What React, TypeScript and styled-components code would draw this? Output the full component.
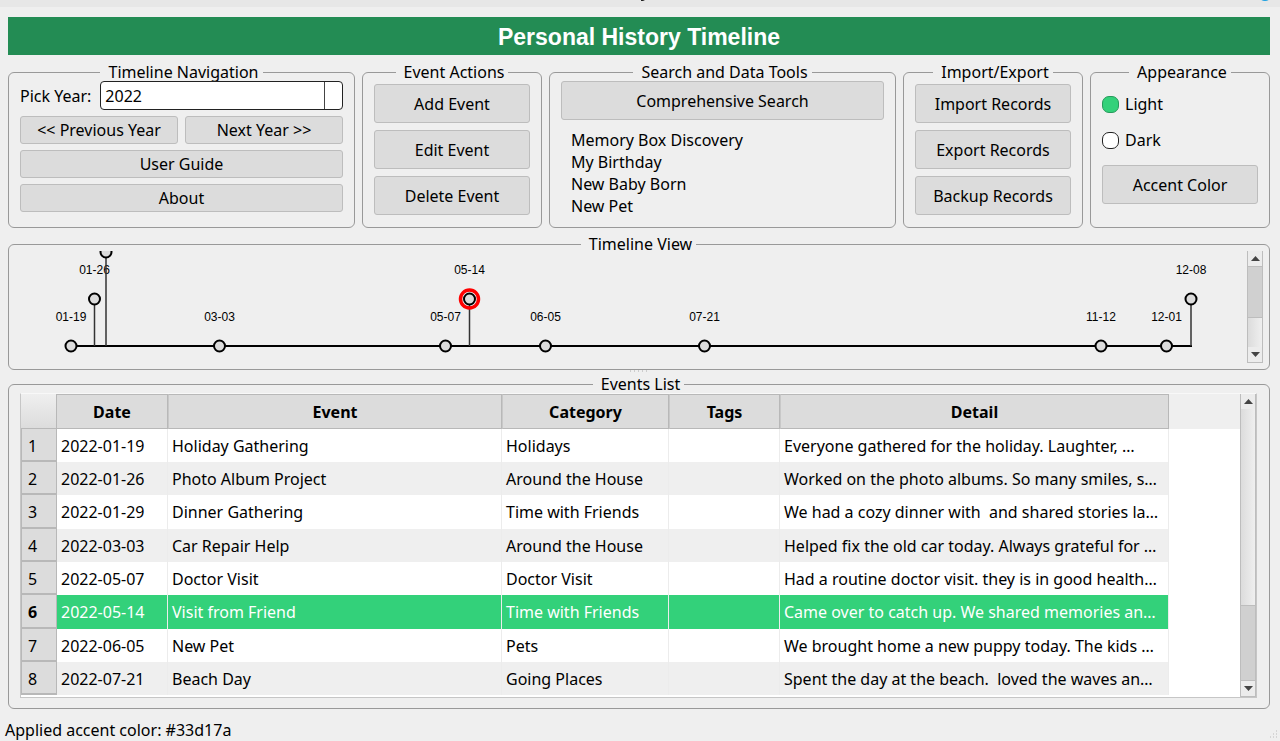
import React, { useState } from "react";
import styled, { createGlobalStyle, css } from "styled-components";

const ink = "#000";
const paper = "#efefef";
const button = "#dcdcdc";
const edge = "#bdbdbd";
const accent = "#33d17a";

const GlobalStyle = createGlobalStyle`
  *, *::before, *::after { box-sizing: border-box; }
  body {
    margin: 0;
    background: ${paper};
    color: ${ink};
    font-family: "Noto Sans", "Open Sans", sans-serif;
    font-size: 16px;
    line-height: 22px;
  }
  button, select, input { font: inherit; color: inherit; }
`;

const Window = styled.div`
  display: flex;
  flex-direction: column;
  height: 100vh;
  min-height: 560px;
  min-width: 1100px;
  overflow: hidden;
`;

const WindowEdge = styled.svg`
  display: block;
  flex: none;
  width: 100%;
  height: 7px;
  background: #e7e7e7;
`;

const Main = styled.main`
  flex: 1;
  min-height: 0;
  display: flex;
  flex-direction: column;
  padding: 10px 10px 0 8px;
`;

const Banner = styled.h1`
  flex: none;
  height: 38px;
  margin: 0 0 10px;
  background: #238c54;
  color: #fff;
  text-align: center;
  font: bold 23px/40px "Liberation Sans", Arial, sans-serif;
`;

const Panels = styled.div`
  display: grid;
  grid-template-columns: 347fr 180fr 347fr 180fr 180fr;
  gap: 7px;
  flex: none;
  height: 163px;
`;

const Group = styled.fieldset<{ $pad?: string; $grow?: boolean }>`
  margin: 0;
  min-width: 0;
  min-height: 0;
  padding: ${(p) => p.$pad ?? "5px 11px 12px"};
  border: 1px solid #999;
  border-radius: 6px;
  ${(p) => p.$grow && css`flex: 1;`}
`;

const Legend = styled.legend`
  margin: 0 auto;
  padding: 0 4px 0 8px;
  line-height: 14px;
`;

const Stack = styled.div<{ $gap: number }>`
  display: flex;
  flex-direction: column;
  gap: ${(p) => p.$gap}px;
`;

const Row = styled.div<{ $gap?: number }>`
  display: flex;
  align-items: center;
  gap: ${(p) => p.$gap ?? 7}px;
`;

const PushButton = styled.button<{ $slim?: boolean }>`
  flex: ${(p) => (p.$slim ? "1 1 0" : "none")};
  width: 100%;
  height: ${(p) => (p.$slim ? 28 : 39)}px;
  min-height: ${(p) => (p.$slim ? 28 : 39)}px;
  padding: 0;
  background: ${button};
  border: 1px solid ${edge};
  border-radius: 3px;
  white-space: nowrap;
`;

const YearField = styled.div`
  flex: 1;
  display: flex;
  height: 29px;
  background: linear-gradient(#444, #444) right 17px top / 1px 100% no-repeat #fff;
  border: 1px solid #222;
  border-radius: 4px;
`;

const YearSelect = styled.select`
  flex: 1;
  appearance: none;
  background: transparent;
  border: 0;
  padding: 0 4px;
`;

const ResultList = styled.ul`
  list-style: none;
  margin: 0;
  padding: 0 10px;
`;

const RadioLabel = styled.label`
  display: flex;
  align-items: center;
  gap: 6px;
  height: 22px;
`;

const Radio = styled.input`
  appearance: none;
  width: 17px;
  height: 17px;
  margin: 0;
  border: 1px solid #222;
  border-radius: 7px;
  background: #fff;
  &:checked {
    background: ${accent};
    border-color: #279a5b;
  }
`;

const Splitter = styled.div<{ $size: number }>`
  flex: none;
  height: ${(p) => p.$size}px;
  display: flex;
  justify-content: center;
`;

const ScrollArea = styled.div`
  display: flex;
  height: 112px;
`;

const Chart = styled.svg`
  flex: 1;
  min-width: 0;
  height: 112px;
  overflow: hidden;
  font: 12px "Liberation Sans", Arial, sans-serif;
`;

const Bar = styled.div`
  flex: none;
  width: 16px;
  display: flex;
  flex-direction: column;
  background: linear-gradient(to right, #dcdcdc, #efefef);
  border: solid ${edge};
  border-width: 0 1px 1px;
`;

const BarButton = styled.button`
  flex: none;
  height: 15px;
  padding: 0;
  border: 0;
  background: #ececec;
  display: grid;
  place-items: center;
`;

const Thumb = styled.div<{ $size: number }>`
  flex: ${(p) => p.$size} 1 0;
  background: #d0d0d0;
  border: solid ${edge};
  border-width: 1px 0;
`;

const Space = styled.div<{ $size: number }>`
  flex: ${(p) => p.$size} 1 0;
`;

const TableFrame = styled.div`
  display: flex;
  height: 100%;
  border: 1px solid #c6c6c6;
  border-top-color: #f8f8f8;
  background: #fff;
`;

const TableView = styled.div`
  flex: 1;
  min-width: 0;
  overflow: hidden;
`;

const Table = styled.table`
  width: 100%;
  table-layout: fixed;
  border-collapse: separate;
  border-spacing: 0;
`;

const Head = styled.th`
  height: 35px;
  padding: 1px 0 0;
  background: ${button};
  border: solid #b8b8b8;
  border-width: 1px 1px 1px 0;
  &:nth-child(n + 3) { border-left: 1px solid #c8c8c8; }
  font-weight: 700;
`;

const Corner = styled.td`
  background: linear-gradient(#efefef, #dcdcdc);
  border: solid #b8b8b8;
  border-width: 0 1px 1px 0;
`;

const HeadRest = styled.td`
  background: ${paper};
`;

const BodyRow = styled.tr<{ $selected: boolean }>`
  height: 33px;
  &:nth-child(3n) { height: 34px; }
  td { background: #fff; }
  &:nth-child(even) td { background: ${paper}; }
  ${(p) =>
    p.$selected &&
    css`
      &&& td { background: ${accent}; color: #fff; }
    `}
  &&& td:last-child { background: #fff; }
`;

const RowHead = styled.th<{ $strong: boolean }>`
  padding: 2px 0 0 6px;
  background: ${button};
  border: solid #b8b8b8;
  border-width: 0 1px 2px 1px;
  text-align: left;
  font-weight: ${(p) => (p.$strong ? 700 : 400)};
`;

const Cell = styled.td`
  padding: 0 0 0 4px;
  border-right: 1px solid #ececec;
  white-space: pre;
  overflow: hidden;
`;

const Rest = styled.td`
  padding: 0;
`;

const Status = styled.footer`
  flex: none;
  display: flex;
  justify-content: space-between;
  align-items: flex-end;
  height: 32px;
  padding: 0 0 0 5px;
  line-height: 22px;
`;

const marks = [
  { date: "01-19", x: 71, level: 0 },
  { date: "01-26", x: 94.5, level: 1 },
  { date: "01-29", x: 106, level: 2 },
  { date: "03-03", x: 219.5, level: 0 },
  { date: "05-07", x: 445.5, level: 0 },
  { date: "05-14", x: 469.5, level: 1, active: true },
  { date: "06-05", x: 545.5, level: 0 },
  { date: "07-21", x: 704.5, level: 0 },
  { date: "11-12", x: 1101, level: 0 },
  { date: "12-01", x: 1166.5, level: 0 },
  { date: "12-08", x: 1191, level: 1 },
];

const chartLeft = 14;
const chartWidth = 1233;
const at = (x: number) => `${((x - chartLeft) / chartWidth) * 100}%`;

const events = [
  ["2022-01-19", "Holiday Gathering", "Holidays", "", "Everyone gathered for the holiday. Laughter, …"],
  ["2022-01-26", "Photo Album Project", "Around the House", "", "Worked on the photo albums. So many smiles, s…"],
  ["2022-01-29", "Dinner Gathering", "Time with Friends", "", "We had a cozy dinner with  and shared stories la…"],
  ["2022-03-03", "Car Repair Help", "Around the House", "", "Helped fix the old car today. Always grateful for …"],
  ["2022-05-07", "Doctor Visit", "Doctor Visit", "", "Had a routine doctor visit. they is in good health…"],
  ["2022-05-14", "Visit from Friend", "Time with Friends", "", "Came over to catch up. We shared memories an…"],
  ["2022-06-05", "New Pet", "Pets", "", "We brought home a new puppy today. The kids …"],
  ["2022-07-21", "Beach Day", "Going Places", "", "Spent the day at the beach.  loved the waves an…"],
];

const found = ["Memory Box Discovery", "My Birthday", "New Baby Born", "New Pet"];

function Arrow({ down }: { down?: boolean }) {
  return (
    <svg width="9" height="5" viewBox="0 0 9 5" aria-hidden="true">
      <path d={down ? "M0 0h9L4.500 5z" : "M0 5h9L4.500 0z"} fill="#444" />
    </svg>
  );
}

function ScrollBar({ before, thumb, after }: { before: number; thumb: number; after: number }) {
  return (
    <Bar>
      <BarButton aria-label="Scroll up"><Arrow /></BarButton>
      <Space $size={before} />
      <Thumb $size={thumb} />
      <Space $size={after} />
      <BarButton aria-label="Scroll down"><Arrow down /></BarButton>
    </Bar>
  );
}

function Timeline() {
  return (
    <Chart role="img" aria-label="Events of the year">
      <line x1={at(71)} x2={at(1192)} y1="95" y2="95" stroke="#000" strokeWidth="2" />
      {marks.map((m) => {
        const y = 95 - m.level * 47;
        return (
          <g key={m.date}>
            {m.level > 0 && <line x1={at(m.x)} x2={at(m.x)} y1="95" y2={y} stroke="#333" strokeWidth="1.500" />}
            {m.active && <circle cx={at(m.x)} cy={y} r="9" fill="none" stroke="#f00" strokeWidth="3.500" />}
            <circle cx={at(m.x)} cy={y} r="5.500" fill={button} stroke="#000" strokeWidth="2" />
            {m.level < 2 && <text x={at(m.x)} y={y - 25} textAnchor="middle">{m.date}</text>}
          </g>
        );
      })}
    </Chart>
  );
}

export default function App() {
  const [mode, setMode] = useState("light");
  const [selected, setSelected] = useState(5);
  return (
    <Window>
      <GlobalStyle />
      <WindowEdge aria-hidden="true">
        <path d="M641 0h4l-2 1h-2z" fill="#222" />
        <svg x="100%" overflow="visible">
          <circle cx="-15" cy="-6" r="7" fill="#1a9fe0" />
        </svg>
      </WindowEdge>
      <Main>
        <Banner>Personal History Timeline</Banner>
        <Panels>
          <Group $pad="2px 11px 12px">
            <Legend>Timeline Navigation</Legend>
            <Stack $gap={6}>
              <Row $gap={9}>
                <label htmlFor="year">Pick Year:</label>
                <YearField>
                  <YearSelect id="year" defaultValue="2022">
                    <option>2021</option>
                    <option>2022</option>
                    <option>2023</option>
                  </YearSelect>
                </YearField>
              </Row>
              <Row>
                <PushButton $slim>&lt;&lt; Previous Year</PushButton>
                <PushButton $slim>Next Year &gt;&gt;</PushButton>
              </Row>
              <PushButton $slim>User Guide</PushButton>
              <PushButton $slim>About</PushButton>
            </Stack>
          </Group>
          <Group>
            <Legend>Event Actions</Legend>
            <Stack $gap={7}>
              <PushButton>Add Event</PushButton>
              <PushButton>Edit Event</PushButton>
              <PushButton>Delete Event</PushButton>
            </Stack>
          </Group>
          <Group $pad="2px 11px 12px">
            <Legend>Search and Data Tools</Legend>
            <Stack $gap={9}>
              <PushButton>Comprehensive Search</PushButton>
              <ResultList>
                {found.map((f) => <li key={f}>{f}</li>)}
              </ResultList>
            </Stack>
          </Group>
          <Group>
            <Legend>Import/Export</Legend>
            <Stack $gap={7}>
              <PushButton>Import Records</PushButton>
              <PushButton>Export Records</PushButton>
              <PushButton>Backup Records</PushButton>
            </Stack>
          </Group>
          <Group $pad="14px 11px 12px">
            <Legend>Appearance</Legend>
            <Stack $gap={14}>
              <RadioLabel>
                <Radio type="radio" name="mode" checked={mode === "light"} onChange={() => setMode("light")} />
                Light
              </RadioLabel>
              <RadioLabel>
                <Radio type="radio" name="mode" checked={mode === "dark"} onChange={() => setMode("dark")} />
                Dark
              </RadioLabel>
              <PushButton>Accent Color</PushButton>
            </Stack>
          </Group>
        </Panels>
        <Splitter $size={9} />
        <Group $pad="0 6px 6px 5px">
          <Legend>Timeline View</Legend>
          <ScrollArea>
            <Timeline />
            <ScrollBar before={0} thumb={52} after={30} />
          </ScrollArea>
        </Group>
        <Splitter $size={7}>
          <svg width="20" height="3" aria-hidden="true">
            <path d="M1 1h20" stroke="#aaa" strokeDasharray="1 3" />
          </svg>
        </Splitter>
        <Group $pad="2px 12px 10px 11px" $grow>
          <Legend>Events List</Legend>
          <TableFrame>
            <TableView>
              <Table>
                <colgroup>
                  <col width="36" />
                  <col width="111" />
                  <col width="334" />
                  <col width="167" />
                  <col width="111" />
                  <col width="389" />
                  <col />
                </colgroup>
                <thead>
                  <tr>
                    <Corner />
                    {["Date", "Event", "Category", "Tags", "Detail"].map((h) => (
                      <Head key={h} scope="col">{h}</Head>
                    ))}
                    <HeadRest />
                  </tr>
                </thead>
                <tbody>
                  {events.map((row, i) => (
                    <BodyRow key={row[0]} $selected={i === selected} onClick={() => setSelected(i)}>
                      <RowHead scope="row" $strong={i === selected}>{i + 1}</RowHead>
                      {row.map((text, c) => <Cell key={c}>{text}</Cell>)}
                      <Rest />
                    </BodyRow>
                  ))}
                </tbody>
              </Table>
            </TableView>
            <ScrollBar before={198} thumb={75} after={0} />
          </TableFrame>
        </Group>
      </Main>
      <Status>
        Applied accent color: {accent}
        <svg width="12" height="12" aria-hidden="true">
          <path d="M8 2h2M5 5h2M8 5h2M2 8h2M5 8h2M8 8h2" stroke="#bbb" strokeDasharray="1 1" />
        </svg>
      </Status>
    </Window>
  );
}
